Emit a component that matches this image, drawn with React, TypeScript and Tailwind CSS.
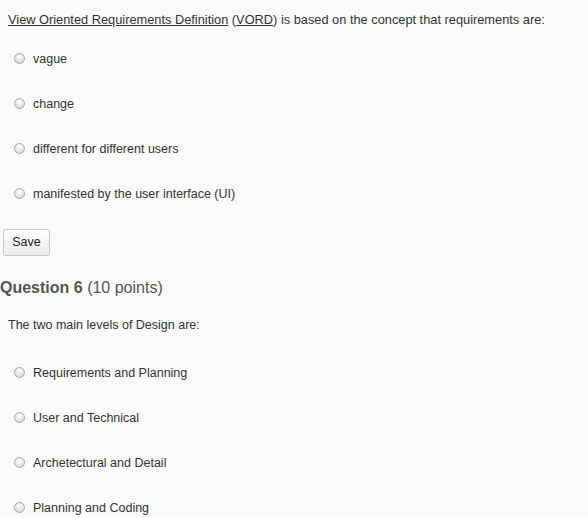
const font = '[font-family:"Comic_Sans_MS","Liberation_Sans",sans-serif]';

type RadioRowProps = {
  name: string;
  label: string;
};

function RadioRow({ name, label }: RadioRowProps) {
  return (
    <label className="flex h-[45px] items-center">
      <input
        type="radio"
        name={name}
        className="ml-[14px] h-[11px] w-[11px] appearance-none rounded-full border border-[#a8a8a8] bg-[radial-gradient(circle_at_50%_30%,#ffffff,#cfcfcf)]"
      />
      <span className="ml-[8px] text-[12.5px] leading-[16px] text-[#333]">{label}</span>
    </label>
  );
}

export default function App() {
  const q5 = ['vague', 'change', 'different for different users', 'manifested by the user interface (UI)'];
  const q6 = ['Requirements and Planning', 'User and Technical', 'Archetectural and Detail', 'Planning and Coding'];

  return (
    <div className={`h-[518px] w-[588px] overflow-hidden bg-[#fafafa] ${font}`}>
      <p className="mt-[12px] pl-[8px] text-[12.8px] leading-[16px] text-[#333]">
        <span className="underline">View Oriented Requirements Definition</span> (
        <span className="underline">VORD</span>) is based on the concept that requirements are:
      </p>

      <div className="mt-[8px]">
        {q5.map((label) => (
          <RadioRow key={label} name="q5" label={label} />
        ))}
      </div>

      <button
        type="button"
        className="ml-[3px] mt-[13px] h-[27px] w-[47px] rounded-[2px] border border-[#c8c8c8] bg-gradient-to-b from-white to-[#ececec] text-[12.5px] text-[#222]"
      >
        Save
      </button>

      <h2 className="mt-[20px] h-[24px] text-[16px] leading-[24px] text-[#555]">
        <span className="font-bold">Question 6</span> (10 points)
      </h2>

      <p className="mt-[17px] pl-[8px] text-[12.5px] leading-[16px] text-[#333]">
        The two main levels of Design are:
      </p>

      <div className="mt-[17px]">
        {q6.map((label) => (
          <RadioRow key={label} name="q6" label={label} />
        ))}
      </div>
    </div>
  );
}
